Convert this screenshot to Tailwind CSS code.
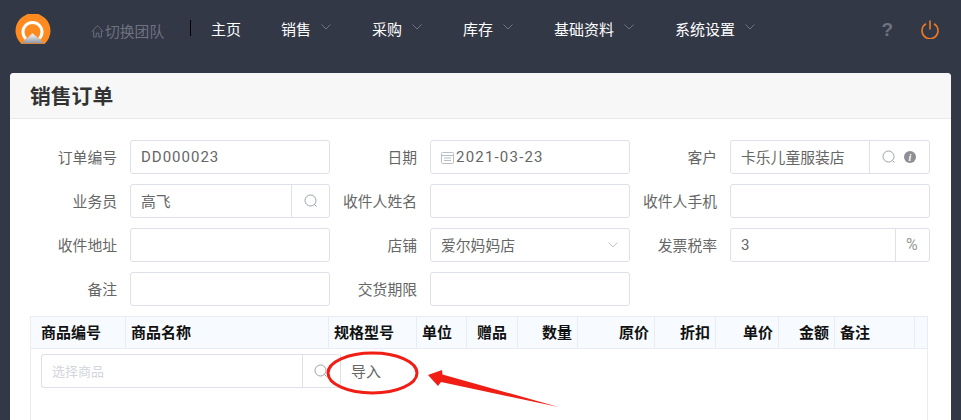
<!DOCTYPE html>
<html lang="en">
  <head>
    <meta charset="UTF-8" />
    <title>销售订单</title>
    <script src="https://cdn.jsdelivr.net/npm/@tailwindcss/browser@4"></script>
  </head>
  <body class="relative h-[420px] overflow-hidden bg-[#333847] font-['Noto_Sans_CJK_SC','Liberation_Sans',sans-serif] text-[15px]">
    <!-- Top nav -->
    <nav class="flex h-[73px] items-start pl-[15px]">
      <svg class="mt-[14px] h-[30px] w-[36px]" viewBox="0 0 36 30">
        <defs>
          <linearGradient id="peak" x1="0" y1="0" x2="0" y2="1">
            <stop offset="0" stop-color="#ffffff" />
            <stop offset="1" stop-color="#8d93a0" />
          </linearGradient>
        </defs>
        <path d="M6 29.5A17.5 17.5 0 1 1 30 29.5Z" fill="#ff8a1f" />
        <circle cx="17.5" cy="18" r="9.5" fill="none" stroke="#fff" stroke-width="3" />
        <path d="M6 29.5L17.5 19L30 29.5Z" fill="url(#peak)" stroke="#ff8a1f" stroke-width="0.6" />
      </svg>
      <div class="ml-[40px] mt-[20px] flex h-[22px] w-[99px] items-center text-[14.8px] text-[#6d7380]">
        <svg class="mr-[1px] h-[13px] w-[13px] shrink-0" viewBox="0 0 13 13" fill="none" stroke="currentColor" stroke-width="0.9">
          <path d="M.8 6.8L5.4 1.6Q6.5.6 7.6 1.6L12.2 6.8M2.6 5.6V12H5.2V8.2H7.8V12H10.4V5.6" />
        </svg>
        切换团队
      </div>
      <div class="mt-[20px] h-[16px] w-px bg-black"></div>
      <ul class="ml-[20px] mt-[18px] flex items-center gap-[41px] leading-[22px] text-white">
        <li class="mr-[-1px]">主页</li>
        <li class="flex items-center gap-[10px]">销售
          <svg class="mt-[-4px] h-[6px] w-[10px]" viewBox="0 0 10 6" fill="none" stroke="#6d7380"><path d="M.5.5L5 5L9.5.5" /></svg></li>
        <li class="flex items-center gap-[10px]">采购
          <svg class="mt-[-4px] h-[6px] w-[10px]" viewBox="0 0 10 6" fill="none" stroke="#6d7380"><path d="M.5.5L5 5L9.5.5" /></svg></li>
        <li class="flex items-center gap-[10px]">库存
          <svg class="mt-[-4px] h-[6px] w-[10px]" viewBox="0 0 10 6" fill="none" stroke="#6d7380"><path d="M.5.5L5 5L9.5.5" /></svg></li>
        <li class="flex items-center gap-[10px]">基础资料
          <svg class="mt-[-4px] h-[6px] w-[10px]" viewBox="0 0 10 6" fill="none" stroke="#6d7380"><path d="M.5.5L5 5L9.5.5" /></svg></li>
        <li class="flex items-center gap-[10px]">系统设置
          <svg class="mt-[-4px] h-[6px] w-[10px]" viewBox="0 0 10 6" fill="none" stroke="#6d7380"><path d="M.5.5L5 5L9.5.5" /></svg></li>
      </ul>
      <span class="ml-auto mt-[20px] font-['Liberation_Sans'] text-[19px] font-bold leading-[20px] text-[#6d7380]">?</span>
      <svg class="ml-[28px] mr-[22px] mt-[20px] h-[19px] w-[18px]" viewBox="0 0 18 19" fill="none" stroke="#f07a23" stroke-width="1.6">
        <path d="M5 3.8A8 8 0 1 0 13 3.8M9 .5V9.5" />
      </svg>
    </nav>

    <!-- Order card -->
    <main class="mx-[10px] h-[347px] rounded-t-[4px] bg-white">
      <header class="flex h-[46px] items-center rounded-t-[4px] border-b border-[#e8e8e8] bg-[#f7f7f7] pl-[20px]">
        <h1 class="text-[20.8px] font-bold text-[#333]">销售订单</h1>
      </header>

      <form class="grid grid-cols-[repeat(3,300px)] gap-y-[10px] pl-[20px] pt-[21px] text-[14.8px] text-[#666]">
        <div class="flex h-[34px] items-center">
          <label class="w-[87px] text-right">订单编号</label>
          <div class="ml-[13px] flex h-full w-[200px] items-center rounded-[3px] border border-[#dfe1ea] pl-[10px] font-['Roboto'] text-[15px] tracking-[1px]">DD000023</div>
        </div>
        <div class="flex h-[34px] items-center">
          <label class="w-[87px] text-right">日期</label>
          <div class="ml-[13px] flex h-full w-[200px] items-center rounded-[3px] border border-[#dfe1ea] pl-[10px] font-['Roboto'] text-[15px] tracking-[1.2px]">
            <svg class="mr-[2px] h-[13px] w-[13px] shrink-0" viewBox="0 0 13 13" fill="none" stroke="#b9bdc6">
              <rect x=".5" y="1.5" width="12" height="11" rx="1" /><path d="M.5 4.5H12.5M3 7H10M3 9.5H10" />
            </svg>
            2021-03-23
          </div>
        </div>
        <div class="flex h-[34px] items-center">
          <label class="w-[87px] text-right">客户</label>
          <div class="ml-[13px] flex h-full w-[200px] items-center rounded-[3px] border border-[#dfe1ea]">
            <span class="w-[139px] border-r border-[#dfe1ea] pl-[10px] leading-[32px]">卡乐儿童服装店</span>
            <svg class="ml-[12px] h-[14px] w-[14px]" viewBox="0 0 14 14" fill="none" stroke="#9aa0aa"><circle cx="6.5" cy="6.5" r="5.5" /><path d="M10.5 10.5L12.5 12.5" /></svg>
            <span class="ml-[8px] flex h-[12px] w-[12px] items-center justify-center rounded-full bg-[#8e8e93] font-['Liberation_Serif'] text-[10px] font-bold italic text-white">i</span>
          </div>
        </div>

        <div class="flex h-[34px] items-center">
          <label class="w-[87px] text-right">业务员</label>
          <div class="ml-[13px] flex h-full w-[200px] items-center rounded-[3px] border border-[#dfe1ea]">
            <span class="w-[161px] border-r border-[#dfe1ea] pl-[10px] leading-[32px]">高飞</span>
            <svg class="ml-[12px] h-[14px] w-[14px]" viewBox="0 0 14 14" fill="none" stroke="#9aa0aa"><circle cx="6.5" cy="6.5" r="5.5" /><path d="M10.5 10.5L12.5 12.5" /></svg>
          </div>
        </div>
        <div class="flex h-[34px] items-center">
          <label class="w-[87px] whitespace-nowrap text-right">收件人姓名</label>
          <div class="ml-[13px] h-full w-[200px] rounded-[3px] border border-[#dfe1ea]"></div>
        </div>
        <div class="flex h-[34px] items-center">
          <label class="w-[87px] whitespace-nowrap text-right">收件人手机</label>
          <div class="ml-[13px] h-full w-[200px] rounded-[3px] border border-[#dfe1ea]"></div>
        </div>

        <div class="flex h-[34px] items-center">
          <label class="w-[87px] text-right">收件地址</label>
          <div class="ml-[13px] h-full w-[200px] rounded-[3px] border border-[#dfe1ea]"></div>
        </div>
        <div class="flex h-[34px] items-center">
          <label class="w-[87px] text-right">店铺</label>
          <div class="ml-[13px] flex h-full w-[200px] items-center justify-between rounded-[3px] border border-[#dfe1ea] pl-[10px] pr-[11px]">
            爱尔妈妈店
            <svg class="h-[6px] w-[10px]" viewBox="0 0 10 6" fill="none" stroke="#c0c4cc"><path d="M.5.5L5 5L9.5.5" /></svg>
          </div>
        </div>
        <div class="flex h-[34px] items-center">
          <label class="w-[87px] text-right">发票税率</label>
          <div class="ml-[13px] flex h-full w-[200px] items-center rounded-[3px] border border-[#dfe1ea]">
            <span class="w-[165px] border-r border-[#dfe1ea] pl-[10px] font-['Roboto'] text-[15px] leading-[32px]">3</span>
            <span class="ml-[10px] font-['Roboto'] text-[16px] text-[#999]">%</span>
          </div>
        </div>

        <div class="flex h-[34px] items-center">
          <label class="w-[87px] text-right">备注</label>
          <div class="ml-[13px] h-full w-[200px] rounded-[3px] border border-[#dfe1ea]"></div>
        </div>
        <div class="flex h-[34px] items-center">
          <label class="w-[87px] text-right">交货期限</label>
          <div class="ml-[13px] h-full w-[200px] rounded-[3px] border border-[#dfe1ea]"></div>
        </div>
      </form>

      <!-- Goods table -->
      <section class="ml-[20px] mt-[10px] h-[104px] w-[898px] border border-b-0 border-[#e8edf5]">
        <div class="grid h-[32px] grid-cols-[95px_203px_88px_50px_51px_60px_77px_61px_63px_56px_80px_1fr] items-center border-b border-[#e8edf5] bg-[#f7fbff] font-bold text-[#111]">
          <div class="h-full border-r border-[#e8edf5] pl-[10px] leading-[30px]">商品编号</div>
          <div class="h-full border-r border-[#e8edf5] pl-[5px] leading-[30px]">商品名称</div>
          <div class="h-full border-r border-[#e8edf5] pl-[5px] leading-[30px]">规格型号</div>
          <div class="h-full border-r border-[#e8edf5] pl-[5px] leading-[30px]">单位</div>
          <div class="h-full border-r border-[#e8edf5] pl-[10px] leading-[30px]">赠品</div>
          <div class="h-full border-r border-[#e8edf5] pr-[5px] text-right leading-[30px]">数量</div>
          <div class="h-full border-r border-[#e8edf5] pr-[5px] text-right leading-[30px]">原价</div>
          <div class="h-full border-r border-[#e8edf5] pr-[5px] text-right leading-[30px]">折扣</div>
          <div class="h-full border-r border-[#e8edf5] pr-[5px] text-right leading-[30px]">单价</div>
          <div class="h-full border-r border-[#e8edf5] pr-[5px] text-right leading-[30px]">金额</div>
          <div class="h-full border-r border-[#e8edf5] pl-[5px] leading-[30px]">备注</div>
          <div></div>
        </div>
        <div class="ml-[10px] mt-[5px] flex h-[34px] items-center">
          <div class="flex h-full w-[299px] shrink-0 items-center overflow-hidden rounded-[3px] border border-r-0 border-[#dfe1ea]">
            <span class="w-[261px] border-r border-[#dfe1ea] pl-[10px] text-[13px] leading-[32px] text-[#d3d6dc]">选择商品</span>
            <svg class="ml-[11px] h-[14px] w-[14px] shrink-0" viewBox="0 0 14 14" fill="none" stroke="#9aa0aa"><circle cx="6.5" cy="6.5" r="5.5" /><path d="M10.5 10.5L12.5 12.5" /></svg>
          </div>
          <div class="flex h-full shrink-0 items-center border-l border-[#dfe1ea] pl-[10px] text-[#666]">导入</div>
        </div>
      </section>
    </main>

    <!-- Screenshot annotation -->
    <svg class="absolute left-[320px] top-[345px] h-[75px] w-[250px]" viewBox="0 0 250 75" fill="none">
      <ellipse cx="52.5" cy="28" rx="44.5" ry="20" stroke="#f01e14" stroke-width="3" />
      <path d="M108 30L122 25L122.5 29.5L238.5 62L121 37L118 41Z" fill="#f01e14" />
    </svg>
  </body>
</html>
